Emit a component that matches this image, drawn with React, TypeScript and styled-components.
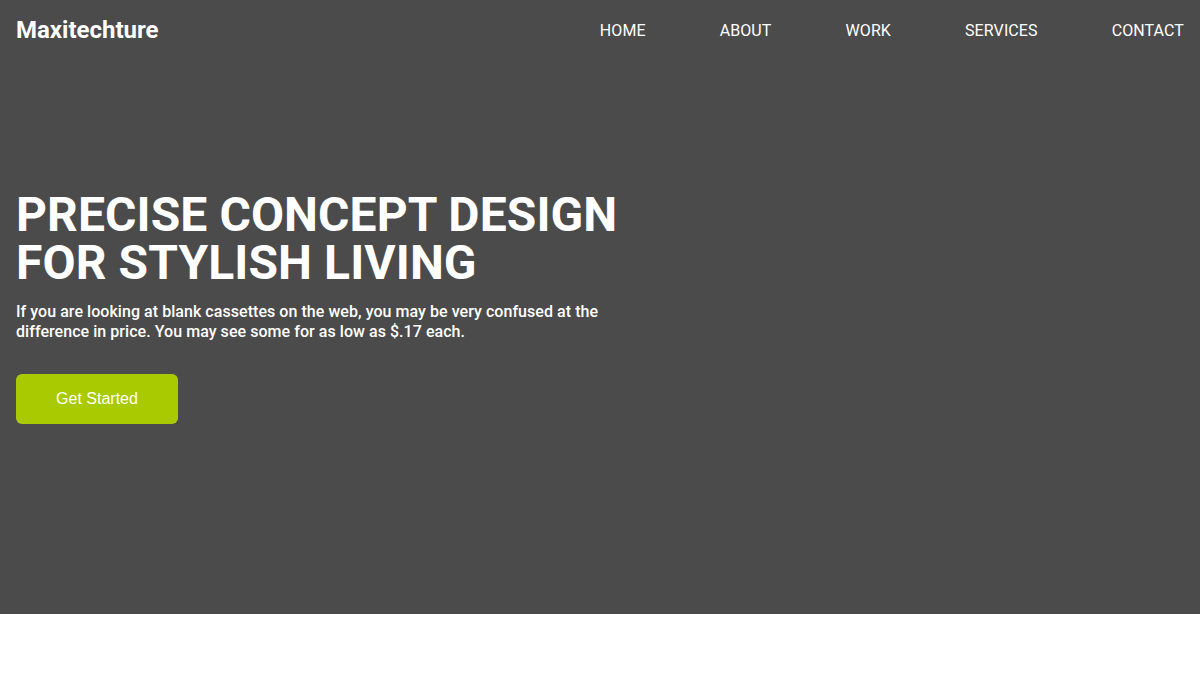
import React from 'react'
import styled, { createGlobalStyle } from 'styled-components'

const GlobalStyle = createGlobalStyle`
  * {
    box-sizing: border-box;
  }
  body {
    margin: 0;
    background: #ffffff;
    font-family: Roboto, "Noto Sans", sans-serif;
  }
`

const navItems = ['HOME', 'ABOUT', 'WORK', 'SERVICES', 'CONTACT']

const App: React.FC = () => {
  return (
    <>
      <GlobalStyle />
      <Hero>
        <Header>
          <Logo>Maxitechture</Logo>
          <Nav>
            {navItems.map((item) => (
              <NavLink key={item} href="#">
                {item}
              </NavLink>
            ))}
          </Nav>
        </Header>
        <Body>
          <Content>
            <Title>
              PRECISE CONCEPT DESIGN
              <br />
              FOR STYLISH LIVING
            </Title>
            <Lead>
              If you are looking at blank cassettes on the web, you may be very
              confused at the difference in price. You may see some for as low
              as $.17 each.
            </Lead>
            <Button>Get Started</Button>
          </Content>
        </Body>
      </Hero>
    </>
  )
}

export default App

const Hero = styled.section`
  height: 90vh;
  background: #4b4b4b;
  color: #ffffff;
  display: flex;
  flex-direction: column;
`
const Header = styled.header`
  height: 60px;
  padding: 0 16px;
  display: flex;
  justify-content: space-between;
  align-items: center;
`
const Logo = styled.div`
  font-size: 24px;
  font-weight: 700;
`
const Nav = styled.nav`
  display: flex;
  gap: 74px;
`
const NavLink = styled.a`
  color: #ffffff;
  text-decoration: none;
  font-size: 16px;
  letter-spacing: 0.1px;
`
const Body = styled.div`
  flex: 1;
  display: flex;
  align-items: center;
  padding: 0 16px 58px;
`
const Content = styled.div`
  max-width: 620px;
`
const Title = styled.h1`
  margin: 0;
  font-size: 48px;
  font-weight: 700;
  line-height: 48px;
  letter-spacing: 0.1px;
`
const Lead = styled.p`
  margin: 15px 0 32px;
  font-size: 16px;
  font-weight: 500;
  line-height: 20px;
  letter-spacing: 0.05px;
  max-width: 600px;
`
const Button = styled.button`
  width: 162px;
  height: 50px;
  border: none;
  border-radius: 6px;
  background: #a9c900;
  color: #ffffff;
  font-family: "Liberation Sans", Arial, sans-serif;
  font-size: 16px;
  cursor: pointer;
`
